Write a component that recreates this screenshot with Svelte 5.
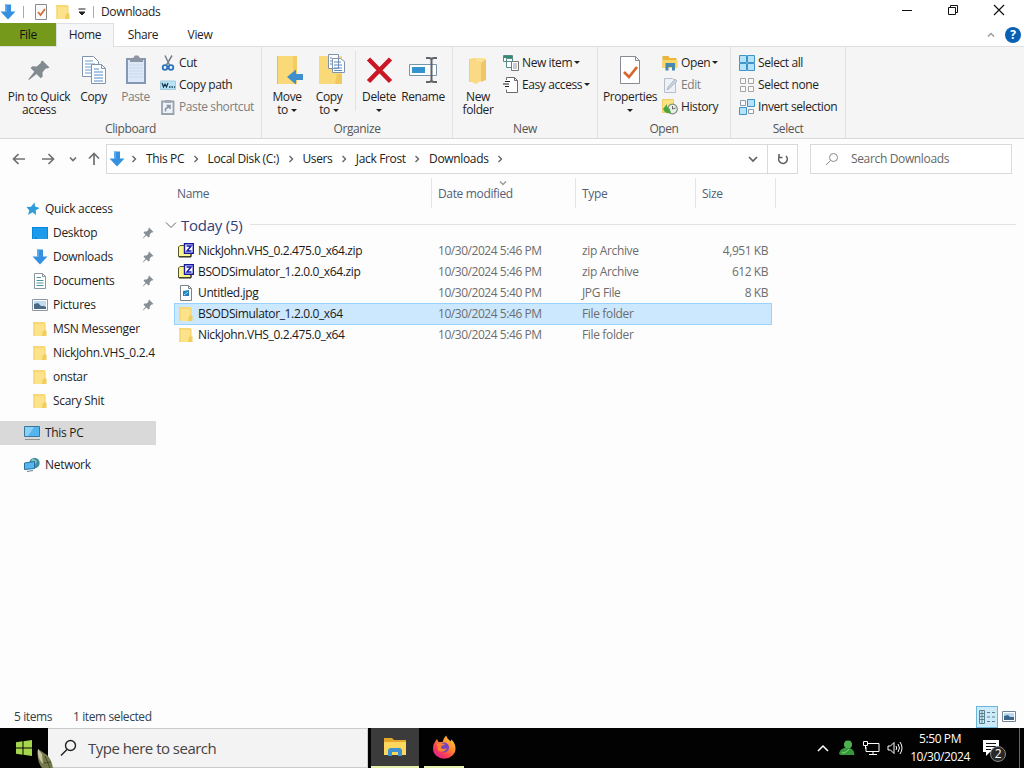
<script>
    const clipboard = [
        { icon: 'cut', label: 'Cut' },
        { icon: 'path', label: 'Copy path' },
        { icon: 'shortcut', label: 'Paste shortcut', disabled: true }
    ];
    const newItems = [
        { icon: 'newitem', label: 'New item', menu: true },
        { icon: 'easy', label: 'Easy access', menu: true }
    ];
    const openItems = [
        { icon: 'open', label: 'Open', menu: true },
        { icon: 'edit', label: 'Edit', disabled: true },
        { icon: 'history', label: 'History' }
    ];
    const selectItems = [
        { icon: 'selall', label: 'Select all' },
        { icon: 'selnone', label: 'Select none' },
        { icon: 'selinvert', label: 'Invert selection' }
    ];

    const crumbs = ['This PC', 'Local Disk (C:)', 'Users', 'Jack Frost', 'Downloads'];

    const places = [
        { icon: 'desktop', label: 'Desktop', pinned: true },
        { icon: 'down', label: 'Downloads', pinned: true },
        { icon: 'document', label: 'Documents', pinned: true },
        { icon: 'pictures', label: 'Pictures', pinned: true },
        { icon: 'folder', label: 'MSN Messenger' },
        { icon: 'folder', label: 'NickJohn.VHS_0.2.4' },
        { icon: 'folder', label: 'onstar' },
        { icon: 'folder', label: 'Scary Shit' }
    ];

    const files = [
        { icon: 'zip', name: 'NickJohn.VHS_0.2.475.0_x64.zip', date: '10/30/2024 5:46 PM', type: 'zip Archive', size: '4,951 KB' },
        { icon: 'zip', name: 'BSODSimulator_1.2.0.0_x64.zip', date: '10/30/2024 5:46 PM', type: 'zip Archive', size: '612 KB' },
        { icon: 'jpg', name: 'Untitled.jpg', date: '10/30/2024 5:40 PM', type: 'JPG File', size: '8 KB' },
        { icon: 'folder', name: 'BSODSimulator_1.2.0.0_x64', date: '10/30/2024 5:46 PM', type: 'File folder', size: '' },
        { icon: 'folder', name: 'NickJohn.VHS_0.2.475.0_x64', date: '10/30/2024 5:46 PM', type: 'File folder', size: '' }
    ];

    let selected = $state(3);
</script>

{#snippet icon(name)}
    <svg class="icon" width="16" height="16" viewBox="0 0 16 16" fill="none">
        {#if name === 'down'}
            <path d="M5 0.500h6v7h4.500L8 15.500 0.500 7.500H5z" fill="#3591df" />
            <path d="M5 0.500h2v7.500H5z" fill="#5aaaf0" />
        {:else if name === 'check'}
            <path d="M2.500 0.500h11v15h-11z" fill="#fafafa" stroke="#8a8a8a" />
            <path d="M5 8l2.500 3L12 5" stroke="#d0703a" stroke-width="1.800" />
        {:else if name === 'folder'}
            <path d="M1.500 1h11.500v14H1.500z" fill="#fce38b" />
            <path d="M1.500 1h11v2h-11z" fill="#f8d775" />
            <path d="M11 9.500h3.500V15H10z" fill="#f1cd59" />
            <path d="M2 1v14M13 2v8" stroke="#f3cf62" />
        {:else if name === 'cut'}
            <path d="M5 0.500l4.500 9.500M12 0.500L6.500 10" stroke="#77828c" stroke-width="1.500" />
            <circle cx="5" cy="12.500" r="2.300" stroke="#2b74bd" stroke-width="1.800" />
            <circle cx="11" cy="12.500" r="2.300" stroke="#2b74bd" stroke-width="1.800" />
        {:else if name === 'path'}
            <path d="M0.500 4h15v8.500h-15z" fill="#b8e2f5" stroke="#a3cbdc" />
            <path d="M2 6l1.500 4L5 7l1.500 3L8 6" stroke="#173a50" stroke-width="1.200" />
            <path d="M9 10h1.500M11.500 10H13M14 10h1" stroke="#173a50" stroke-width="1.500" />
        {:else if name === 'shortcut'}
            <path d="M2 2.500h11.500v12.500H2z" fill="#eff2f7" stroke="#99a3b0" stroke-width="1.800" />
            <path d="M5 1h6v3H5z" fill="#a0aab6" />
            <path d="M5.500 12.500V10l4-3M6.500 6.500H10V10" stroke="#8a98aa" stroke-width="1.600" />
        {:else if name === 'newitem'}
            <path d="M0.500 0.500h9v6h-9zM3.500 3.500h6v9h-6z" fill="#fff" stroke="#568b88" />
            <path d="M1 2h8" stroke="#328c78" stroke-width="2" />
            <path d="M8.500 6.500h7v9h-7z" fill="#fff" stroke="#777" />
            <path d="M10 9h4M10 11h4M10 13h4" stroke="#999" />
        {:else if name === 'easy'}
            <path d="M3.500 0.500h8l3 3v12h-11v-3M3.500 3V0.500M11.500 0.500v3h3" fill="#fff" stroke="#6a6a6a" />
            <path d="M2 4.500h5M0 7h6M2 9.500h4" stroke="#222" />
        {:else if name === 'open'}
            <path d="M0.500 1h6l1 2h7v10h-14z" fill="#e9b63c" />
            <path d="M0.500 5h15v8h-15z" fill="#fbd566" />
            <path d="M3.500 15.500V8h9.500v7.500h-3V12H6.500v3.500z" fill="#4889af" />
        {:else if name === 'edit'}
            <path d="M2.500 1.500h8l3 3v11h-11z" fill="#eef2f8" stroke="#b6bec9" />
            <path d="M5 13l1-3 7-8 2 2-7 7z" fill="#c8d2df" stroke="#b3bdc9" />
        {:else if name === 'history'}
            <path d="M0.500 0.500h11v13h-11z" fill="#fbe281" stroke="#efcf65" />
            <circle cx="10.500" cy="10" r="4.800" fill="#e9eee6" stroke="#808b7c" stroke-width="1.200" />
            <path d="M1 10l4-5v3c2 0 3 2 4 6-4 1-6 0-8-4z" fill="#4ba63f" />
            <path d="M10.500 7v3l3-1" stroke="#666" />
        {:else if name === 'selall'}
            <path d="M0.500 0.500h7v7h-7zM8.500 0.500h7v7h-7zM0.500 8.500h7v7h-7zM8.500 8.500h7v7h-7z" fill="#b6e1fa" stroke="#3d95c8" />
        {:else if name === 'selnone'}
            <path d="M1.500 1.500h5v5h-5zM9.500 1.500h5v5h-5zM1.500 9.500h5v5h-5zM9.500 9.500h5v5h-5z" fill="#fafafa" stroke="#a5a5a5" />
        {:else if name === 'selinvert'}
            <path d="M1.500 1.500h5v5h-5zM9.500 10.500h5v4h-5z" fill="#fafafa" stroke="#8f9dab" />
            <path d="M8.500 0.500h7v7h-7zM0.500 8.500h7v7h-7z" fill="#b6e1fa" stroke="#3d95c8" />
        {:else if name === 'desktop'}
            <path d="M0 2h16v12H0z" fill="#078ade" />
            <path d="M1 3h14v9H1z" fill="#1c9bed" />
            <path d="M1 13h2M5 13h10" stroke="#45aeea" />
        {:else if name === 'document'}
            <path d="M2.500 0.500h8l3 3v12h-11zM10.500 0.500v3h3" fill="#fff" stroke="#8b959d" />
            <path d="M4.500 4.500H9M4.500 7.500h7M4.500 10h7M4.500 12.500h7" stroke="#4d97a1" />
        {:else if name === 'pictures'}
            <path d="M0.500 2.500h15v11h-15z" fill="#fff" stroke="#8b98a5" />
            <path d="M2 4h12v8H2z" fill="#c0dcf0" />
            <path d="M2 7l4-1 3 3 3 0 2 1v2H2z" fill="#4b6a86" />
        {:else if name === 'zip'}
            <path d="M0.500 4l1.500-1.500h5v2h6v9H0.500z" fill="#fbf68b" stroke="#55552a" />
            <path d="M1 14h12V9" stroke="#2d2d20" />
            <path d="M6.500 0.700h8.800v9.600H6.500z" fill="#fff" stroke="#1717a2" stroke-width="1.400" />
            <path d="M8.500 3H13L9 8h4.500" stroke="#1717b5" stroke-width="1.500" />
        {:else if name === 'jpg'}
            <path d="M2.500 0.500h8l3 3v12h-11zM10.500 0.500v3h3" fill="#fff" stroke="#7d8488" />
            <path d="M5 6l6-1v6H5z" fill="#2380bd" />
            <path d="M6 10l4-3" stroke="#a7dcf3" />
        {:else if name === 'star'}
            <path d="M10.500 1.500l.7 4 4.300 1.500-3.700 2.200.2 4.800-3.500-2.800-4.500 2.800 1.300-4.500-2.800-3.500 4.500-.3z" fill="#309bd9" />
        {:else if name === 'pc'}
            <path d="M0.500 1.500h15v10h-15z" fill="#54b4ed" stroke="#3977a0" />
            <path d="M1 2h9l-6 9H1z" fill="#8bd0f5" />
            <path d="M1 14.500h15" stroke="#929292" />
        {:else if name === 'network'}
            <circle cx="10.500" cy="6" r="5.200" fill="#438d9f" />
            <path d="M8 1l5 3-2 4-4-2z" fill="#86c4bf" />
            <path d="M0.500 6l10-1.500v7l-10 1z" fill="#55b6ef" stroke="#28719d" />
            <path d="M3 14.500l6-1" stroke="#638397" />
        {/if}
    </svg>
{/snippet}

{#snippet bigIcon(name)}
    <svg class="big-icon" width="32" height="32" viewBox="0 0 32 32" fill="none">
        {#if name === 'pin'}
            <path d="M19.500 6.500l7 7-2 1-1.500-.3-3.500 4 .2 4.300-2 1.800-4.200-4.200L6 26l-.7-.7 6-7.500L7.500 14l2-1.800 4.300.2 4.200-3.700-.2-1z" fill="#818b90" />
        {:else if name === 'copy'}
            <path d="M4.500 2.500h11l5 5v15h-16z" fill="#fff" stroke="#7f93ae" />
            <path d="M7 7h8M7 10h10M7 13h9M7 16h6M7 19h6" stroke="#6a9bd0" />
            <path d="M13.500 10.500h10l4 4v15h-14zM23.500 10.500v4h4" fill="#fff" stroke="#7f93ae" />
            <path d="M16 15h5M16 18h9M16 21h9M16 24h9M16 27h9" stroke="#568cc8" />
        {:else if name === 'paste'}
            <path d="M7 5h18v24H7z" fill="#dce8f8" stroke="#8498b6" stroke-width="2" />
            <path d="M10 4h3l2-2.500h3L20 4h3v4H10z" fill="#8d97a3" />
            <path d="M9 11h14M9 14h14M9 17h14M9 20h14M9 23h14" stroke="#cbd9ee" />
        {:else if name === 'move'}
            <path d="M6 2h20v28H6z" fill="#fada78" />
            <path d="M22 2h4v28h-4z" fill="#f3cc63" />
            <path d="M6.500 2v28" stroke="#e6bd50" />
            <path d="M16 23l9-7.500V20h7v6h-7v4.500z" fill="#3e8ed0" />
        {:else if name === 'copyto'}
            <path d="M6 2h23v28H6z" fill="#fada78" />
            <path d="M24 20h5v10h-7z" fill="#f0c85c" />
            <path d="M15.500 0.500h10v14h-10zM19.500 4.500h8l4 3v11h-12z" fill="#fff" stroke="#8294aa" />
            <path d="M17 4h2M17 7h2M17 10h2M21 8h7M21 11h8M21 14h8M21 16.500h8" stroke="#568cc8" />
        {:else if name === 'delete'}
            <path d="M5.500 5l22 22.500M27.500 5l-22 22.500" stroke="#cb1626" stroke-width="4.600" />
        {:else if name === 'rename'}
            <path d="M2.500 10.500h27v11h-27z" fill="#fff" stroke="#7695ab" />
            <path d="M5 13h13v6H5z" fill="#3293cf" />
            <path d="M19 4h3q2.500 0 2.500 2v20q0 2-2.500 2h-3M30 4h-3q-2.500 0-2.500 2v20q0 2 2.500 2h3" stroke="#5f6468" stroke-width="2" />
        {:else if name === 'newfolder'}
            <path d="M7 5l7-1v23l-7 1z" fill="#f5cf70" />
            <path d="M13 4h10v17H13z" fill="#fbe295" />
            <path d="M8 5l11 3v19l-5 3-6-3z" fill="#fada85" />
            <path d="M19 9l5-4v21l-5 2z" fill="#edc668" />
        {:else if name === 'properties'}
            <path d="M6.500 2.500h15l4 4v23h-19zM21.500 2.500v4h4" fill="#fff" stroke="#858b91" />
            <path d="M10 18l5 5 8-10" stroke="#d8662c" stroke-width="2.800" />
        {/if}
    </svg>
{/snippet}

{#snippet chevron(dir = 'right')}
    <svg class="chevron {dir}" width="8" height="8" viewBox="0 0 8 8" fill="none" stroke="currentColor" stroke-width="1.400">
        <path d="M2.500 1l3 3-3 3"></path>
    </svg>
{/snippet}

{#snippet pin()}
    <svg width="12" height="12" viewBox="0 0 12 12" fill="#888f94">
        <path d="M7 0.500l4.500 4.500-1.200.6-.8-.2-1.800 2.200v2.200l-1.200.8-2-2-3.500 3-.4-.4 3-3.500-2-2 .8-1.200h2.200L6.600 2.500l-.2-.8z" />
    </svg>
{/snippet}

{#snippet big(name, width, lines, opts = {})}
    <button class="big {width}" class:disabled={opts.disabled}>
        {@render bigIcon(name)}
        <span>{lines[0]}</span>
        {#if lines[1] || opts.menu}
            <span>{lines[1] ?? ''}{#if opts.menu}<i class="caret" class:alone={!lines[1]}></i>{/if}</span>
        {/if}
    </button>
{/snippet}

{#snippet smallList(items)}
    <div class="small-list">
        {#each items as item (item.label)}
            <button class="small" class:disabled={item.disabled}>
                {@render icon(item.icon)}
                <span>{item.label}</span>
                {#if item.menu}<i class="caret"></i>{/if}
            </button>
        {/each}
    </div>
{/snippet}

<div class="screen">
    <header class="titlebar">
        {@render icon('down')}
        <i class="sep"></i>
        <span class="qat">{@render icon('check')}</span>
        <span class="qat folder">{@render icon('folder')}</span>
        <svg class="customize" width="8" height="8" viewBox="0 0 8 8"><path d="M0.500 1h7M1 4h6L4 7z" fill="#222" stroke="#222" stroke-width="1" /></svg>
        <i class="sep last"></i>
        <span class="title">Downloads</span>
        <div class="controls">
            <svg width="12" height="12" viewBox="0 0 12 12" fill="none" stroke="#111"><path d="M1 6.500h10" /></svg>
            <svg width="12" height="12" viewBox="0 0 12 12" fill="none" stroke="#111"><path d="M1.500 3.500h7v7h-7zM3.500 3.500v-2h7v7h-2" /></svg>
            <svg width="12" height="12" viewBox="0 0 12 12" fill="none" stroke="#111" stroke-width="1.200"><path d="M1 1l10 10M11 1L1 11" /></svg>
        </div>
    </header>

    <nav class="tabs">
        <button class="tab file">File</button>
        <button class="tab active">Home</button>
        <button class="tab share">Share</button>
        <button class="tab">View</button>
        <div class="help">
            {@render chevron('up')}
            <span class="help-badge">?</span>
        </div>
    </nav>

    <section class="ribbon">
        <div class="group clipboard">
            <div class="body">
                {@render big('pin', 'w74', ['Pin to Quick', 'access'])}
                {@render big('copy', 'w36', ['Copy'])}
                {@render big('paste', 'w48', ['Paste'], { disabled: true })}
                {@render smallList(clipboard)}
            </div>
            <div class="caption">Clipboard</div>
        </div>
        <div class="group organize">
            <div class="body">
                {@render big('move', 'w42', ['Move', 'to'], { menu: true })}
                {@render big('copyto', 'w42', ['Copy', 'to'], { menu: true })}
                <i class="divider"></i>
                {@render big('delete', 'w42', ['Delete'], { menu: true })}
                {@render big('rename', 'w46', ['Rename'])}
            </div>
            <div class="caption">Organize</div>
        </div>
        <div class="group new">
            <div class="body">
                {@render big('newfolder', 'w42', ['New', 'folder'])}
                {@render smallList(newItems)}
            </div>
            <div class="caption">New</div>
        </div>
        <div class="group open">
            <div class="body">
                {@render big('properties', 'w56', ['Properties'], { menu: true })}
                {@render smallList(openItems)}
            </div>
            <div class="caption">Open</div>
        </div>
        <div class="group select">
            <div class="body">
                {@render smallList(selectItems)}
            </div>
            <div class="caption">Select</div>
        </div>
    </section>

    <section class="navbar">
        <div class="history">
            <svg width="14" height="14" viewBox="0 0 14 14"><path d="M13 7H1.500M6.500 2l-5 5 5 5" /></svg>
            <svg width="14" height="14" viewBox="0 0 14 14"><path d="M1 7h11.500M7.500 2l5 5-5 5" /></svg>
            {@render chevron('down')}
            <svg width="14" height="14" viewBox="0 0 14 14"><path d="M7 13V1.500M2 6.500l5-5 5 5" /></svg>
        </div>
        <div class="address">
            {@render icon('down')}
            {@render chevron()}
            {#each crumbs as crumb (crumb)}
                <span class="crumb">{crumb}</span>
                {@render chevron()}
            {/each}
            <svg class="drop" width="10" height="8" viewBox="0 0 10 8" fill="none" stroke="#606060" stroke-width="1.700"><path d="M1 2l4 4 4-4" /></svg>
            <span class="refresh">
                <svg width="12" height="12" viewBox="0 0 12 12" fill="none" stroke="#606060" stroke-width="1.600"><path d="M2.500 3.500a4.300 4.300 0 1 0 6.500-.500M2 1v3.500h3.500" /></svg>
            </span>
        </div>
        <div class="search">
            <svg width="14" height="14" viewBox="0 0 14 14" fill="none" stroke="#888"><circle cx="8.500" cy="5.500" r="4" /><path d="M5.500 8.500L1 13" /></svg>
            <span>Search Downloads</span>
        </div>
    </section>

    <main>
        <aside>
            <div class="place root">{@render icon('star')}<span>Quick access</span></div>
            {#each places as place (place.label)}
                <div class="place">
                    {@render icon(place.icon)}
                    <span>{place.label}</span>
                    {#if place.pinned}<em>{@render pin()}</em>{/if}
                </div>
            {/each}
            <div class="place root current">{@render icon('pc')}<span>This PC</span></div>
            <div class="place root network">{@render icon('network')}<span>Network</span></div>
        </aside>

        <section class="list">
            <div class="columns">
                <span>Name</span>
                <span>Date modified<b>{@render chevron('down')}</b></span>
                <span>Type</span>
                <span>Size</span>
            </div>
            <div class="today">
                <svg width="12" height="8" viewBox="0 0 12 8" fill="none" stroke="#666"><path d="M1 1.500l5 5 5-5" /></svg>
                <span>Today (5)</span>
                <hr />
            </div>
            {#each files as file, i (file.name)}
                <button class="row" class:selected={selected === i} onclick={() => (selected = i)}>
                    {@render icon(file.icon)}
                    <span class="name">{file.name}</span>
                    <span>{file.date}</span>
                    <span>{file.type}</span>
                    <span class="size">{file.size}</span>
                </button>
            {/each}
        </section>
    </main>

    <footer class="status">
        <span>5 items</span>
        <span>1 item selected</span>
        <div class="views">
            <div class="view on">
                <svg width="16" height="16" viewBox="0 0 16 16" fill="none" stroke="#5b8190"><path d="M0.500 1.500h5v13h-5zM0.500 4.500h5M0.500 7.500h5M0.500 10.500h5M3 1.500v13M8 3.500h3M13 3.500h3M8 8h3M13 8h3M8 12.500h3M13 12.500h3" /></svg>
            </div>
            <div class="view">
                <svg width="14" height="12" viewBox="0 0 14 12"><path d="M0.500 0.500h13v10H0.500z" fill="#fff" stroke="#758493" /><path d="M2 2h10v7H2z" fill="#b7d9f2" /><path d="M2 5l4-1 2 2 4 0v3H2z" fill="#3e6289" /></svg>
            </div>
        </div>
    </footer>

    <div class="taskbar">
        <div class="start">
            <svg width="16" height="16" viewBox="0 0 16 16" fill="#a5d64c"><path d="M0 2.200l6.500-.9v6.200H0zM7.500 1.200L16 0v7.500H7.500zM0 8.500h6.500v6.200L0 13.800zM7.500 8.500H16V16l-8.500-1.200z" /></svg>
        </div>
        <div class="task-search">
            <svg width="18" height="18" viewBox="0 0 18 18" fill="none" stroke="#222" stroke-width="1.400"><circle cx="10.500" cy="6.500" r="5" /><path d="M7 10.500L1 16.500" /></svg>
            <span>Type here to search</span>
        </div>
        <div class="app active">
            <svg width="22" height="20" viewBox="0 0 22 20"><path d="M0 1h8l2 2h12v15H0z" fill="#e5a72c" /><path d="M0 5h22v13H0z" fill="#fcd75d" /><path d="M4 19v-5q0-3 3-3h8q3 0 3 3v5h-4v-4H8v4z" fill="#3e92d1" /></svg>
        </div>
        <div class="app firefox">
            <svg width="24" height="24" viewBox="0 0 24 24">
                <defs>
                    <linearGradient id="fire" x1="1" y1="0" x2="0.200" y2="1">
                        <stop offset="0" stop-color="#ffe04a" />
                        <stop offset="0.450" stop-color="#ff8a2a" />
                        <stop offset="0.750" stop-color="#f9385b" />
                        <stop offset="1" stop-color="#d92298" />
                    </linearGradient>
                </defs>
                <path d="M5 4l1.500 3 4 0c1-3 2-5 4-6.500 0 3 3 4 4 6l1-2c3 3 4 6 4 9a11 10 0 0 1-22.500 0C1 9 3 7 5 4z" fill="url(#fire)" />
                <circle cx="12" cy="12.500" r="5" fill="#7444c5" />
                <path d="M5 9c3-2 5 0 8 0-1 2-4 1-4 3s3 3 6 1c-1 4-7 5-9 2z" fill="#ff832c" />
            </svg>
        </div>
        <div class="tray">
            <svg class="up" width="12" height="8" viewBox="0 0 12 8" fill="none" stroke="#fff" stroke-width="1.500"><path d="M1 7l5-5 5 5" /></svg>
            <svg class="buddy" width="16" height="16" viewBox="0 0 16 16"><circle cx="9" cy="4.500" r="4" fill="#4eb04f" /><path d="M0 14c1-5 5-7 9-6 4 0 6 2 6.500 7H2z" fill="#35983c" /><path d="M3 13c3 0 6-2 7-4" stroke="#8ad47d" fill="none" /></svg>
            <svg class="lan" width="17" height="16" viewBox="0 0 17 16" fill="none" stroke="#fff"><path d="M5 3.500h11v8H3V7M10 11.500v3M6 14.500h8M0.500 1.500h4v4h-4zM2.500 5.500V9" /></svg>
            <svg class="volume" width="16" height="14" viewBox="0 0 16 14" fill="none" stroke="#fff"><path d="M1 5h2.500L7 1.500v11L3.500 9H1zM9 5q1.500 2 0 4M11 3q3 4 0 8M13 1q4 6 0 12" /></svg>
            <div class="clock"><span>5:50 PM</span><span>10/30/2024</span></div>
            <div class="notify">
                <svg width="18" height="18" viewBox="0 0 18 18"><path d="M1 1h16v12H8l-4 4v-4H1z" fill="#fff" /><path d="M4 4.500h10M4 7.500h10M4 10.500h5" stroke="#111" /></svg>
                <span class="count">2</span>
            </div>
            <i class="peek"></i>
        </div>
        <svg class="cursor" width="20" height="22" viewBox="0 0 20 22"><path d="M2 1l9 6c3 3 5 7 6 13H6C2 15 1 8 2 1z" fill="#777b4c" /><path d="M2 1l4 5 1 10C3 12 1 7 2 1z" fill="#c5c2a0" /><path d="M9 8l5 12M8 15l7-1" stroke="#43482a" /></svg>
    </div>
</div>

<style>
    :global(body) {
        margin: 0;
        overflow: hidden;
    }

    .screen {
        width: 1024px;
        height: 768px;
        display: flex;
        flex-direction: column;
        background: #fdfdfd;
        color: #1f1f1f;
        font-family: "Open Sans", "Noto Sans", sans-serif;
        font-size: 12px;
        letter-spacing: -0.35px;
        line-height: 16px;
        white-space: nowrap;
    }

    .screen * {
        box-sizing: border-box;
    }

    button {
        padding: 0;
        border: 0;
        background: none;
        color: inherit;
        font: inherit;
        letter-spacing: inherit;
    }

    svg {
        flex: none;
        display: block;
    }

    .titlebar {
        height: 23px;
        display: flex;
        align-items: center;
        background: #fff;
    }

    .sep {
        width: 1px;
        height: 12px;
        margin-left: 7px;
        background: #aaa;
    }

    .qat {
        margin-left: 9px;
    }

    .qat.folder {
        margin-left: 6px;
    }

    .customize {
        margin-left: 7px;
    }

    .sep.last {
        margin-left: 7px;
    }

    .title {
        margin-left: 7px;
    }

    .controls {
        display: flex;
        gap: 34px;
        margin-left: auto;
        margin-right: 19px;
        padding-bottom: 3px;
    }

    .tabs {
        height: 23px;
        display: flex;
        background: #fff;
    }

    .tab {
        width: 56px;
        padding-top: 1px;
        text-align: center;
    }

    .tab.file {
        background: #75991a;
        color: #111;
    }

    .tab.active {
        width: 58px;
        height: 24px;
        border: 1px solid #dedfe0;
        border-bottom: 0;
        background: #f5f6f7;
        padding: 0 0 1px;
        z-index: 1;
    }

    .tab.share {
        width: 58px;
    }

    .help {
        display: flex;
        align-items: center;
        gap: 10px;
        margin-left: auto;
        margin-right: 3px;
        color: #999;
    }

    .help-badge {
        width: 16px;
        height: 16px;
        border-radius: 50%;
        background: #0960b5;
        color: #fff;
        font-weight: bold;
        text-align: center;
    }

    .ribbon {
        height: 93px;
        display: flex;
        border-top: 1px solid #dedfe0;
        border-bottom: 1px solid #d8d9da;
        background: #f5f5f6;
        letter-spacing: -0.4px;
    }

    .group {
        border-right: 1px solid #e1e2e3;
        display: flex;
        flex-direction: column;
        height: 91px;
    }

    .body {
        height: 73px;
        padding: 4px 0 0 3px;
        display: flex;
    }

    .clipboard {
        width: 262px;
    }

    .clipboard .body {
        padding-left: 2px;
    }

    .organize {
        width: 191px;
    }

    .organize .body,
    .new .body {
        padding-left: 4px;
    }

    .new {
        width: 145px;
    }

    .open {
        width: 133px;
    }

    .open .body {
        padding-left: 4px;
    }

    .select {
        width: 115px;
    }

    .select .body {
        padding-left: 4px;
    }

    .caption {
        height: 18px;
        padding-top: 1px;
        text-align: center;
        color: #555;
    }

    .big {
        display: flex;
        flex-direction: column;
        align-items: center;
        height: 68px;
        padding-top: 3px;
        line-height: 13px;
    }

    .big-icon {
        margin-bottom: 4px;
    }

    .w36 {
        width: 35px;
    }

    .w42 {
        width: 42px;
    }

    .w46 {
        width: 46px;
    }

    .w48 {
        width: 49px;
    }

    .w56 {
        width: 56px;
    }

    .w74 {
        width: 74px;
    }

    .disabled {
        color: #7d7d7d;
    }

    .caret {
        display: inline-block;
        border: 3px solid transparent;
        border-top-color: #222;
        border-bottom: 0;
        vertical-align: 2px;
        margin-left: 3px;
    }

    .caret.alone {
        margin-left: 0;
    }

    .small .caret {
        margin-left: -1px;
    }

    .divider {
        width: 1px;
        height: 60px;
        margin: 0 2px 0 5px;
        background: #e1e2e3;
    }

    .small-list {
        display: flex;
        flex-direction: column;
        margin-left: 4px;
    }

    .clipboard .small-list {
        margin-left: 0;
    }

    .small {
        height: 22px;
        padding-top: 1px;
        display: flex;
        align-items: center;
        gap: 3px;
    }

    .navbar {
        height: 39px;
        display: flex;
        padding-top: 5px;
    }

    .history {
        width: 106px;
        height: 30px;
        padding-left: 12px;
        display: flex;
        align-items: center;
        gap: 15px;
        color: #777;
    }

    .history > svg {
        fill: none;
        stroke: #707070;
        stroke-width: 1.7;
    }

    .history .chevron {
        margin: 0 -5px 0 -1px;
    }

    .address {
        width: 692px;
        height: 30px;
        border: 1px solid #d9d9d9;
        background: #fff;
        display: flex;
        align-items: center;
        padding-left: 2px;
        color: #222;
    }

    .address > .chevron {
        margin: 0 7.7px;
        color: #666;
    }

    .address > .icon + .chevron {
        margin: 0 8px 0 5px;
    }

    .drop {
        margin-left: auto;
        margin-right: 9px;
    }

    .chevron.down {
        transform: rotate(90deg);
    }

    .chevron.up {
        transform: rotate(-90deg);
    }

    .refresh {
        width: 30px;
        height: 28px;
        border-left: 1px solid #d9d9d9;
        display: flex;
        align-items: center;
        justify-content: center;
    }

    .search {
        width: 202px;
        height: 30px;
        margin-left: 12px;
        padding-left: 14px;
        border: 1px solid #d9d9d9;
        background: #fff;
        display: flex;
        align-items: center;
        gap: 12px;
        color: #666;
    }

    main {
        height: 528px;
        display: flex;
    }

    aside {
        width: 156px;
        padding-top: 19px;
        letter-spacing: -0.3px;
    }

    .place {
        height: 24px;
        padding-left: 32px;
        display: flex;
        align-items: center;
        gap: 5px;
    }

    .place.root {
        padding-left: 24px;
    }

    .place em {
        margin-left: auto;
        margin-right: 2px;
    }

    .current {
        margin-top: 8px;
        background: #d9d9d9;
    }

    .network {
        margin-top: 8px;
    }

    .list {
        flex: 1;
        padding-left: 18px;
    }

    .columns {
        height: 31px;
        display: flex;
        color: #525f78;
    }

    .columns span {
        position: relative;
        width: 120px;
        height: 30px;
        padding: 8px 0 0 6px;
        border-right: 1px solid #e5e5e5;
    }

    .columns span:first-child {
        width: 258px;
        padding-left: 3px;
    }

    .columns span:nth-child(2) {
        width: 144px;
    }

    .columns span:last-child {
        width: 80px;
    }

    .columns b {
        position: absolute;
        top: 1px;
        left: 67px;
        color: #999;
    }

    .today {
        height: 31px;
        display: flex;
        align-items: center;
        gap: 4px;
        margin-left: -9px;
        color: #33417a;
        font-size: 15px;
        letter-spacing: -0.25px;
    }

    .today hr {
        flex: 1;
        height: 1px;
        margin: 0 8px 0 4px;
        border: 0;
        background: #e2e2e2;
    }

    .row {
        width: 598px;
        height: 21px;
        padding-left: 3px;
        border: 1px solid transparent;
        display: grid;
        grid-template-columns: 20px 240px 144px 120px 66px;
        align-items: center;
        text-align: left;
        color: #6d6d6d;
        letter-spacing: -0.45px;
    }

    .row .name {
        color: #1a1a1a;
        letter-spacing: -0.37px;
    }

    .row span:nth-of-type(3) {
        letter-spacing: -0.35px;
    }

    .row .size {
        text-align: right;
    }

    .row.selected {
        height: 22px;
        margin-bottom: -1px;
        border-color: #99d1ff;
        background: #cce8ff;
    }

    .status {
        height: 22px;
        display: flex;
        align-items: center;
        gap: 21px;
        padding-left: 14px;
        color: #31424e;
        letter-spacing: -0.4px;
    }

    .views {
        display: flex;
        margin-left: auto;
        margin-right: 4px;
    }

    .view {
        width: 22px;
        height: 22px;
        display: grid;
        place-items: center;
    }

    .view.on {
        border: 1px solid #6bb5da;
        background: #cdeaf8;
    }

    .taskbar {
        position: relative;
        height: 40px;
        display: flex;
        background: #020202;
        color: #fff;
    }

    .start {
        width: 48px;
        display: flex;
        align-items: center;
        padding-left: 16px;
    }

    .task-search {
        width: 320px;
        padding-left: 12px;
        border: 1px solid #ccc;
        border-left: 0;
        background: #f3f3f3;
        color: #444;
        display: flex;
        align-items: center;
        gap: 10px;
        font-size: 15px;
        letter-spacing: -0.52px;
    }

    .app {
        width: 48px;
        margin-left: 3px;
        display: grid;
        place-items: center;
        border-bottom: 2px solid #e6efac;
    }

    .app.active {
        background: #3b3b3b;
    }

    .app.firefox {
        width: 40px;
        margin-left: 5px;
    }

    .tray {
        margin-left: auto;
        display: flex;
        align-items: center;
    }

    .buddy {
        margin-left: 10px;
    }

    .lan {
        margin-left: 8px;
    }

    .volume {
        margin-left: 7px;
    }

    .clock {
        width: 58px;
        margin-left: 8px;
        display: flex;
        flex-direction: column;
        align-items: center;
        line-height: 18px;
        letter-spacing: -0.4px;
    }

    .notify {
        position: relative;
        margin-left: 13px;
    }

    .count {
        position: absolute;
        left: 8px;
        top: 7px;
        width: 16px;
        height: 16px;
        border: 1px solid #888;
        border-radius: 50%;
        background: #282828;
        text-align: center;
        line-height: 14px;
    }

    .peek {
        width: 1px;
        height: 40px;
        margin-left: 19px;
        margin-right: 4px;
        background: #666;
    }

    .cursor {
        position: absolute;
        left: 36px;
        top: 20px;
    }
</style>
